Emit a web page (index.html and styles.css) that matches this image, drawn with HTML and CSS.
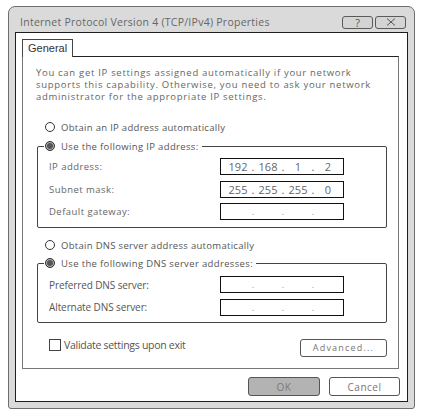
FILE: index.html
```html
<!DOCTYPE html>
<html>
<head>
<meta charset="utf-8">
<link rel="stylesheet" href="styles.css">
</head>
<body>
<div class="window">
  <div class="titlebar">
    <span class="title">Internet Protocol Version 4 (TCP/IPv4) Properties</span>
    <div class="tbtns">
      <span class="tbtn">?</span>
      <span class="tbtn"><svg width="10" height="8" viewBox="0 0 10 8"><path d="M1 0.5 L9 7.5 M9 0.5 L1 7.5" stroke="#555" stroke-width="1" fill="none"/></svg></span>
    </div>
  </div>
  <div class="client">
    <div class="tabs"><div class="tab">General</div></div>
    <div class="panel">
      <p class="desc">You can get IP settings assigned automatically if your network<br>supports this capability. Otherwise, you need to ask your network<br>administrator for the appropriate IP settings.</p>
      <div class="radio-row"><span class="radio"></span>Obtain an IP address automatically</div>
      <fieldset class="group g1">
        <legend><span class="radio on"></span>Use the following IP address:</legend>
        <div class="rows">
          <span class="lbl">IP address:</span>
          <div class="ip"><span>192</span><i>.</i><span>168</span><i>.</i><span>1</span><i>.</i><span>2</span></div>
          <span class="lbl">Subnet mask:</span>
          <div class="ip"><span>255</span><i>.</i><span>255</span><i>.</i><span>255</span><i>.</i><span>0</span></div>
          <span class="lbl">Default gateway:</span>
          <div class="ip empty"><span></span><i>.</i><span></span><i>.</i><span></span><i>.</i><span></span></div>
        </div>
      </fieldset>
      <div class="radio-row dns"><span class="radio"></span>Obtain DNS server address automatically</div>
      <fieldset class="group g2">
        <legend><span class="radio on"></span>Use the following DNS server addresses:</legend>
        <div class="rows">
          <span class="lbl2">Preferred DNS server:</span>
          <div class="ip empty"><span></span><i>.</i><span></span><i>.</i><span></span><i>.</i><span></span></div>
          <span class="lbl2">Alternate DNS server:</span>
          <div class="ip empty"><span></span><i>.</i><span></span><i>.</i><span></span><i>.</i><span></span></div>
        </div>
      </fieldset>
      <div class="bottom-row">
        <div class="check"><span class="box"></span>Validate settings upon exit</div>
        <span class="btn adv">Advanced...</span>
      </div>
    </div>
    <div class="actions">
      <span class="btn ok">OK</span>
      <span class="btn cancel">Cancel</span>
    </div>
  </div>
</div>
</body>
</html>
```
FILE: styles.css
```css
* { box-sizing: border-box; }
body {
  margin: 0;
  background: #fff;
  font-family: "Open Sans", "DejaVu Sans", sans-serif;
  color: #666;
}
.window {
  margin: 6px 0 0 8px;
  width: 407px;
  height: 403px;
  border: 1px solid #6e6e6e;
  border-radius: 7px 7px 3px 3px;
  background: #dadada;
  display: flex;
  flex-direction: column;
}
.titlebar {
  height: 25px;
  display: flex;
  align-items: center;
  justify-content: space-between;
  padding: 5px 8px 0 11px;
}
.title {
  font-size: 10.5px;
  letter-spacing: 0.26px;
  color: #666;
  line-height: 12px;
}
.tbtns { display: flex; gap: 2px; }
.tbtn {
  width: 31px;
  height: 13px;
  border: 1px solid #5a5a5a;
  border-radius: 3px;
  background: #d4d4d4;
  font-size: 11px;
  line-height: 11px;
  color: #555;
  display: flex;
  align-items: center;
  justify-content: center;
}
.client {
  flex: 1;
  margin: 0 6px 6px 6px;
  border: 1px solid #1e1e1e;
  background: #fff;
  padding: 6px 7px 0 6px;
  display: flex;
  flex-direction: column;
}
.tabs { display: flex; }
.tab {
  width: 51px;
  height: 18px;
  margin-bottom: -1px;
  position: relative;
  z-index: 1;
  background: #fff;
  border: 1px solid #444;
  border-bottom: none;
  padding-left: 5px;
  font-family: "Liberation Sans", Arial, sans-serif;
  font-size: 11px;
  line-height: 16px;
  color: #333;
}
.panel {
  width: 377px;
  height: 313px;
  border: 1px solid #777;
  border-top-color: #222;
  display: flex;
  flex-direction: column;
}
.desc {
  margin: 0;
  padding: 10px 0 0 13px;
  font-size: 9.5px;
  line-height: 12px;
  letter-spacing: 0.7px;
  color: #666;
}
.radio-row {
  margin-top: 18px;
  height: 12px;
  padding-left: 22px;
  display: flex;
  align-items: center;
  font-size: 9.5px;
  letter-spacing: 0.3px;
  color: #555;
}
.radio-row.dns { margin-top: 11px; }
.radio {
  width: 10px;
  height: 10px;
  border: 1.5px solid #333;
  border-radius: 50%;
  margin-right: 6px;
  flex: none;
  background: #fff;
}
.radio.on {
  background: #555;
  box-shadow: inset 0 0 0 1px #bbb;
}
.group {
  margin: 6px 11px 0 14px;
  padding: 5px 0 7px 11px;
  border: 1px solid #444;
  border-radius: 2px;
  min-width: 0;
}
.group.g2 { margin-top: 5px; padding-top: 6px; padding-bottom: 6px; }
.group legend {
  padding: 0 3px 0 1px;
  margin-left: -5px;
  height: 14px;
  display: flex;
  align-items: center;
  font-size: 9.5px;
  letter-spacing: 0.35px;
  color: #555;
}
.rows {
  display: grid;
  grid-template-columns: 171px 124px;
  grid-auto-rows: 17px;
  row-gap: 5.5px;
  align-items: center;
}
.lbl {
  font-size: 9.5px;
  letter-spacing: 0.45px;
  color: #666;
}
.lbl2 {
  font-size: 10px;
  letter-spacing: -0.1px;
  color: #555;
}
.ip {
  height: 17px;
  border: 1px solid #111;
  display: flex;
  align-items: center;
  padding-left: 4px;
  font-size: 11px;
  color: #666;
}
.ip span { width: 26px; text-align: center; }
.ip i { width: 4px; font-style: normal; text-align: center; }
.ip.empty i { color: #999; font-size: 9px; }
.bottom-row {
  margin-top: 16px;
  display: flex;
  justify-content: space-between;
  align-items: flex-start;
  padding: 0 11px 0 26px;
}
.check {
  display: flex;
  align-items: center;
  height: 12px;
  font-size: 10.5px;
  letter-spacing: -0.28px;
  color: #555;
}
.box {
  width: 12px;
  height: 12px;
  border: 1px solid #444;
  margin-right: 3px;
  flex: none;
}
.btn {
  display: flex;
  align-items: center;
  justify-content: center;
  border: 1px solid #555;
  border-radius: 3px;
  background: #fff;
  color: #777;
}
.adv {
  width: 87px;
  height: 18px;
  font-size: 9px;
  letter-spacing: 1.2px;
}
.actions {
  margin-top: 8px;
  display: flex;
  justify-content: flex-end;
  gap: 9px;
}
.ok, .cancel {
  height: 19px;
  font-size: 10px;
  letter-spacing: 0.5px;
}
.ok { width: 72px; background: #b3b3b3; color: #7a7a7a; }
.cancel { width: 71px; }
```
